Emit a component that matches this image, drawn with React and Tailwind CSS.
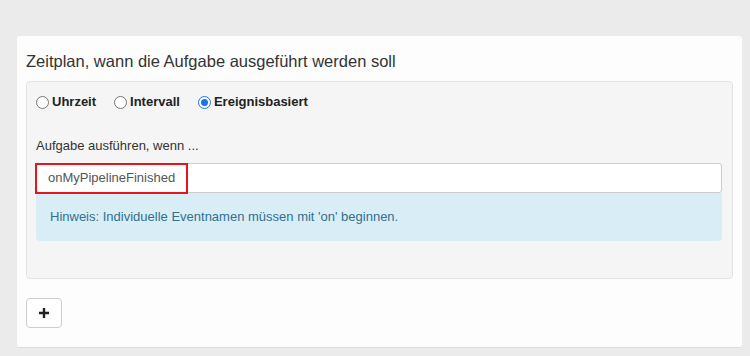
import React from 'react';

function Radio({ checked }) {
  return (
    <span className={`inline-block w-[13px] h-[13px] rounded-full border ${checked ? 'border-[#1a73e8] bg-white' : 'border-[#767676] bg-white'} relative mr-[3px]`}>
      {checked && <span className="absolute left-[2px] top-[2px] w-[7px] h-[7px] rounded-full bg-[#1a73e8]"></span>}
    </span>
  );
}

export default function App() {
  return (
    <div className="w-[750px] h-[356px] bg-[#ebebeb] pt-[36px] pl-[17px] font-['Liberation_Sans',Arial,sans-serif] text-[#333]">
      <div className="w-[725px] h-[312px] bg-[#fdfdfd] rounded-[3px] border-b border-[#dcdcdc] px-[9px] pt-[15px]">
        <h1 className="text-[16.5px] leading-[20px] mb-[10px]">Zeitplan, wann die Aufgabe ausgeführt werden soll</h1>
        <div className="h-[198px] bg-[#f5f5f5] border border-[#e3e3e3] rounded-[4px] pl-[9px] pr-[10px] pt-[12px]">
          <div className="flex items-center text-[13px] font-bold leading-[16px] text-[#222]">
            <label className="flex items-center mr-[18px]"><Radio />Uhrzeit</label>
            <label className="flex items-center mr-[18px]"><Radio />Intervall</label>
            <label className="flex items-center"><Radio checked />Ereignisbasiert</label>
          </div>
          <div className="text-[13px] leading-[16px] mt-[28px]">Aufgabe ausführen, wenn ...</div>
          <div className="relative mt-[9px] h-[30px] bg-white border border-[#ccc] rounded-[3px] flex items-center pl-[11px] text-[13px] text-[#555]">
            onMyPipelineFinished
            <span className="absolute left-[-2px] top-[-1px] w-[153px] h-[31px] border-[2px] border-[#e8141b]"></span>
          </div>
          <div className="h-[48px] bg-[#d9edf7] rounded-b-[4px] flex items-center pl-[14px] text-[13px] text-[#31708f]">
            Hinweis: Individuelle Eventnamen müssen mit 'on' beginnen.
          </div>
        </div>
        <button className="mt-[19px] w-[36px] h-[30px] border border-[#ccc] rounded-[4px] bg-white flex items-center justify-center">
          <svg width="12" height="12" viewBox="0 0 12 12"><path d="M6 1v10M1 6h10" stroke="#222" strokeWidth="2.4" /></svg>
        </button>
      </div>
    </div>
  );
}
